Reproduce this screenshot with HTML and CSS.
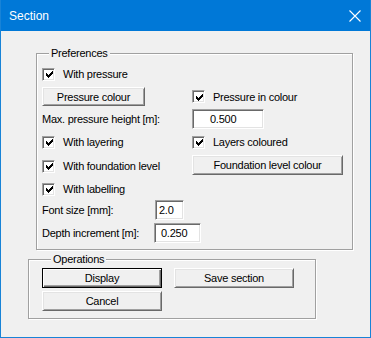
FILE: index.html
```html
<!DOCTYPE html>
<html lang="en">
<head>
  <meta charset="UTF-8">
  <title>Section</title>
  <link rel="stylesheet" href="styles.css">
</head>
<body>
  <div class="window">
    <div class="titlebar">
      <span class="title">Section</span>
      <svg class="close" width="12" height="12" viewBox="0 0 12 12">
        <path d="M0.5 0.5L11.5 11.5M11.5 0.5L0.5 11.5" stroke="#fff" stroke-width="1.1" fill="none"/>
      </svg>
    </div>

    <div class="content">
      <!-- Preferences -->
      <fieldset class="group prefs">
        <legend>Preferences</legend>

        <div class="row row-a">
          <label class="check"><span class="cb"><svg width="9" height="9" viewBox="0 0 9 9"><path d="M1 3h1v3H1zM2 4h1v3H2zM3 5h1v3H3zM4 4h1v3H4zM5 3h1v3H5zM6 2h1v3H6zM7 1h1v3H7z"/></svg></span>With pressure</label>
        </div>

        <div class="row row-b">
          <div class="left"><button class="btn btn-pc">Pressure colour</button></div>
          <label class="check"><span class="cb"><svg width="9" height="9" viewBox="0 0 9 9"><path d="M1 3h1v3H1zM2 4h1v3H2zM3 5h1v3H3zM4 4h1v3H4zM5 3h1v3H5zM6 2h1v3H6zM7 1h1v3H7z"/></svg></span>Pressure in colour</label>
        </div>

        <div class="row row-c">
          <div class="left">Max. pressure height [m]:</div>
          <div class="field f-max">0.500</div>
        </div>

        <div class="row row-d">
          <div class="left"><label class="check"><span class="cb"><svg width="9" height="9" viewBox="0 0 9 9"><path d="M1 3h1v3H1zM2 4h1v3H2zM3 5h1v3H3zM4 4h1v3H4zM5 3h1v3H5zM6 2h1v3H6zM7 1h1v3H7z"/></svg></span>With layering</label></div>
          <label class="check"><span class="cb"><svg width="9" height="9" viewBox="0 0 9 9"><path d="M1 3h1v3H1zM2 4h1v3H2zM3 5h1v3H3zM4 4h1v3H4zM5 3h1v3H5zM6 2h1v3H6zM7 1h1v3H7z"/></svg></span>Layers coloured</label>
        </div>

        <div class="row row-e">
          <div class="left"><label class="check"><span class="cb"><svg width="9" height="9" viewBox="0 0 9 9"><path d="M1 3h1v3H1zM2 4h1v3H2zM3 5h1v3H3zM4 4h1v3H4zM5 3h1v3H5zM6 2h1v3H6zM7 1h1v3H7z"/></svg></span>With foundation level</label></div>
          <button class="btn btn-fl">Foundation level colour</button>
        </div>

        <div class="row row-f">
          <label class="check"><span class="cb"><svg width="9" height="9" viewBox="0 0 9 9"><path d="M1 3h1v3H1zM2 4h1v3H2zM3 5h1v3H3zM4 4h1v3H4zM5 3h1v3H5zM6 2h1v3H6zM7 1h1v3H7z"/></svg></span>With labelling</label>
        </div>

        <div class="row row-g">
          <div class="left-sm">Font size [mm]:</div>
          <div class="field f-font">2.0</div>
        </div>

        <div class="row row-h">
          <div class="left-xs">Depth increment [m]:</div>
          <div class="field f-depth">0.250</div>
        </div>
      </fieldset>

      <!-- Operations -->
      <fieldset class="group ops">
        <legend>Operations</legend>
        <div class="ops-grid">
          <button class="btn btn-op default">Display</button>
          <button class="btn btn-op">Save section</button>
          <button class="btn btn-op">Cancel</button>
        </div>
      </fieldset>
    </div>
  </div>
</body>
</html>
```

FILE: styles.css
```css
html, body {
  margin: 0;
  padding: 0;
  background: #f0f0f0;
}
body {
  font-family: "Liberation Sans", Arial, sans-serif;
  font-size: 11px;
  letter-spacing: -0.25px;
  color: #000;
}
.window {
  width: 371px;
  height: 338px;
  box-sizing: border-box;
  border: 1px solid #1883d7;
  border-top: none;
  background: #f0f0f0;
  overflow: hidden;
}
.titlebar {
  height: 31px;
  background: #0078d7;
  display: flex;
  align-items: center;
  justify-content: space-between;
  padding: 0 9px 0 8px;
}
.title {
  color: #fff;
  font-size: 12px;
  letter-spacing: 0;
  padding-top: 1px;
}
.close {
  display: block;
  margin-top: 1px;
}
.content {
  padding: 16px 0 0 0;
}

/* group boxes */
.group {
  margin: 0;
  border: 1px solid #a0a0a0;
  box-shadow: inset 1px 1px 0 #fff, 1px 1px 0 #fff;
  min-inline-size: 0;
}
.group legend {
  padding: 0 2px;
  margin-left: 7px;
  line-height: 13px;
  background: #f0f0f0;
}
.prefs {
  margin-left: 35px;
  width: 317px;
  box-sizing: border-box;
  padding: 7px 0 6px 5px;
}
.ops {
  margin: 3px 0 0 27px;
  width: 288px;
  box-sizing: border-box;
  padding: 2px 0 7px 13px;
}
.ops legend {
  margin-left: 9px;
}

/* rows */
.row {
  display: flex;
  align-items: center;
  white-space: nowrap;
}
.row-a { height: 14px; }
.row-b { height: 19px; margin-top: 6px; }
.row-c { height: 20px; margin-top: 3px; }
.row-d { height: 14px; margin-top: 6px; }
.row-e { height: 20px; margin-top: 6px; }
.row-f { height: 14px; margin-top: 7px; }
.row-g { height: 20px; margin-top: 4px; }
.row-h { height: 20px; margin-top: 3px; }
.row-e .left { padding-top: 2px; }
.left { width: 150px; flex: none; }
.left-sm { width: 113px; flex: none; }
.left-xs { width: 112px; flex: none; }

/* checkboxes */
.check {
  display: flex;
  align-items: center;
}
.cb {
  width: 13px;
  height: 13px;
  box-sizing: border-box;
  background: #fff;
  border: 1px solid;
  border-color: #a0a0a0 #fff #fff #a0a0a0;
  box-shadow: inset 1px 1px 0 #696969, inset -1px -1px 0 #e3e3e3;
  margin-right: 8px;
  flex: none;
  display: flex;
  align-items: center;
  justify-content: center;
}
.cb svg {
  display: block;
  fill: #000;
  margin: 1px 0 0 1px;
}

/* edit fields */
.field {
  height: 20px;
  box-sizing: border-box;
  background: #fff;
  border: 1px solid;
  border-color: #a0a0a0 #fff #fff #a0a0a0;
  box-shadow: inset 1px 1px 0 #696969, inset -1px -1px 0 #e3e3e3;
  line-height: 18px;
}
.f-max { width: 72px; padding-left: 17px; }
.f-font { width: 29px; padding-left: 3px; }
.f-depth { width: 47px; padding-left: 6px; }

/* buttons */
.btn {
  font: inherit;
  letter-spacing: inherit;
  color: #000;
  background: #f0f0f0;
  border: 1px solid;
  border-color: #fff #696969 #696969 #fff;
  box-shadow: inset 1px 1px 0 #e3e3e3, inset -1px -1px 0 #a0a0a0;
  padding: 0;
  margin: 0;
  box-sizing: border-box;
  text-align: center;
  flex: none;
}
.btn-pc { width: 103px; height: 19px; }
.btn-fl { width: 151px; height: 20px; }
.ops-grid {
  display: grid;
  grid-template-columns: 120px 120px;
  column-gap: 12px;
  row-gap: 3px;
}
.btn-op { height: 20px; }
.btn.default {
  border-color: #000;
  box-shadow: inset 1px 1px 0 #fff, inset -1px -1px 0 #696969, inset -2px -2px 0 #a0a0a0;
}
```
